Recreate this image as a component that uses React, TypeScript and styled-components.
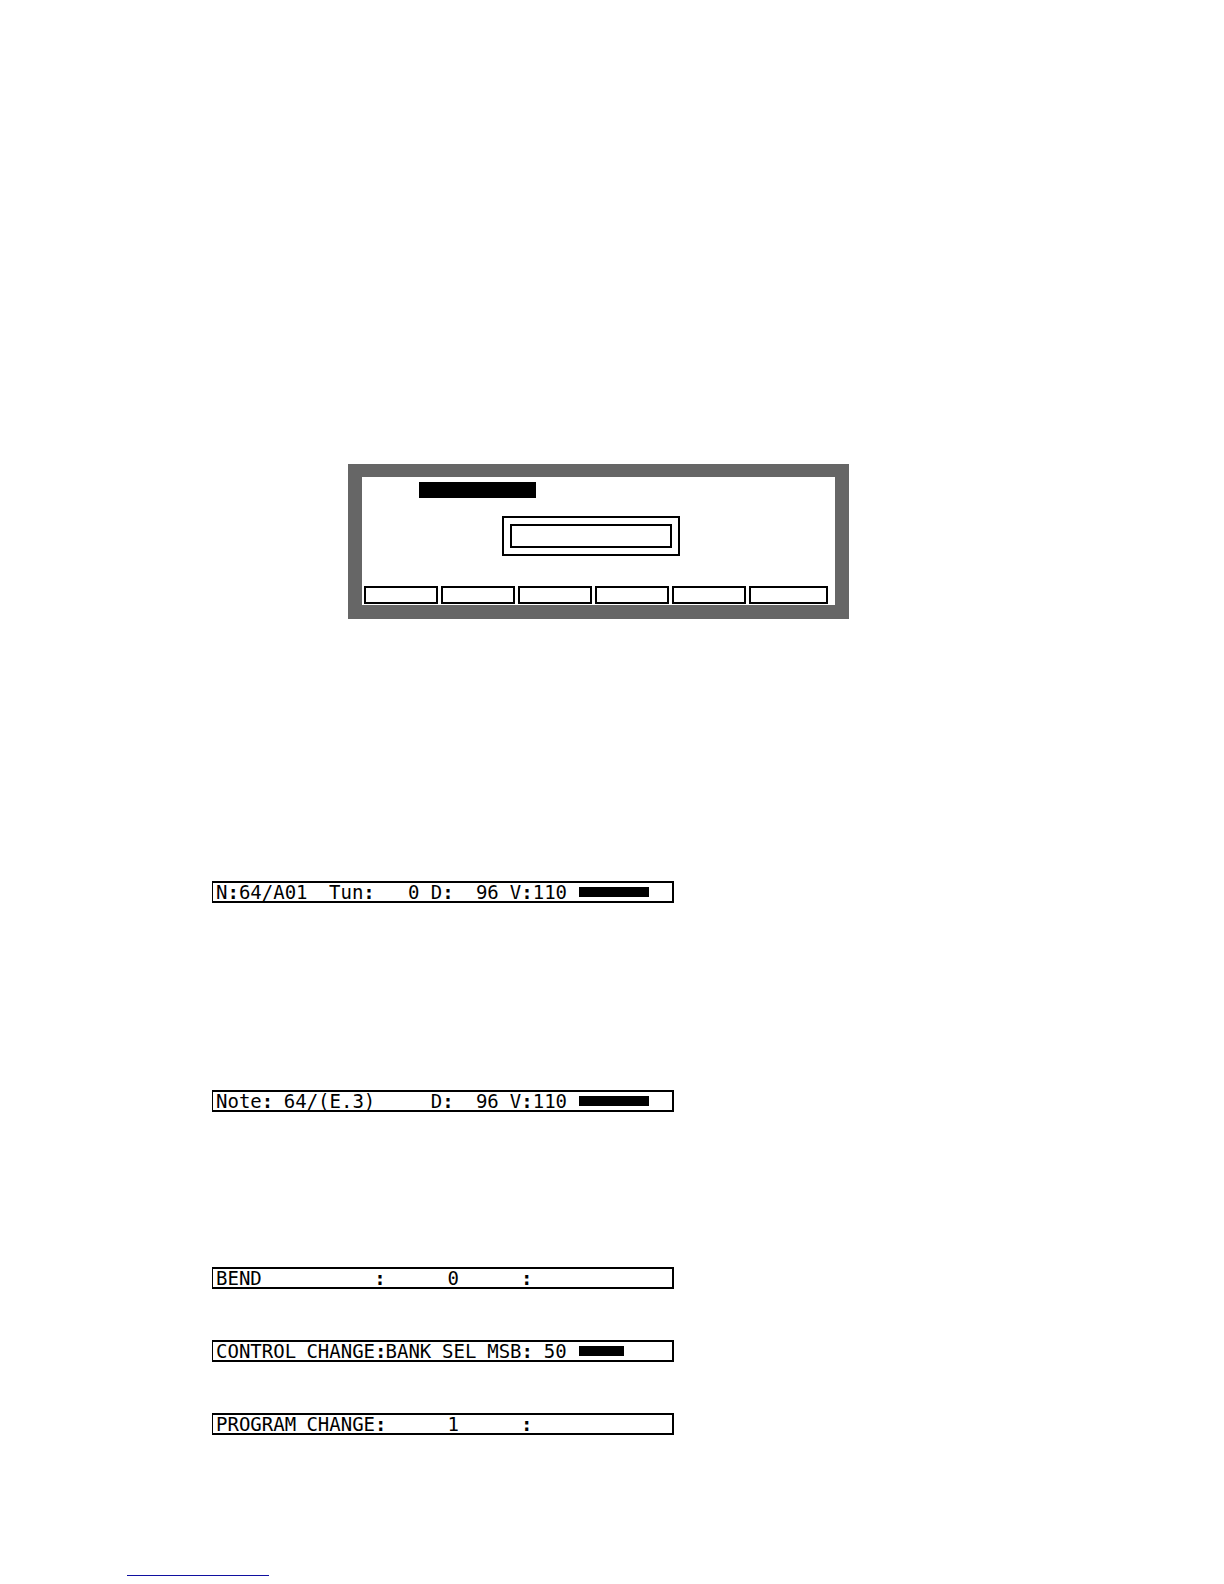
import React from "react";
import styled, { createGlobalStyle } from "styled-components";

const GlobalStyle = createGlobalStyle`
  *, *::before, *::after { box-sizing: border-box; }
  body { margin: 0; background: #ffffff; color: #000000; }
`;

const Page = styled.main`
  display: flex;
  flex-direction: column;
  padding: 464px 127px 8px;
  font-family: "DejaVu Sans Mono", "Liberation Mono", monospace;
`;

const Screen = styled.section`
  display: flex;
  flex-direction: column;
  width: 100%;
  max-width: 501px;
  margin-left: 221px;
  border: 14px solid #666666;
  border-top-width: 13px;
  padding: 5px 7px 1px 2px;
`;

const Highlight = styled.div`
  width: 117px;
  height: 16px;
  margin-left: 55px;
  background: #000000;
`;

const Popup = styled.div`
  width: 178px;
  margin: 18px 0 30px 138px;
  padding: 6px;
  border: 2px solid #000000;
`;

const PopupInner = styled.div`
  height: 24px;
  border: 2px solid #000000;
`;

const SoftKeys = styled.div`
  display: grid;
  grid-template-columns: repeat(5, minmax(0, 74fr)) minmax(0, 79fr);
  gap: 3px;
`;

const SoftKey = styled.button`
  height: 18px;
  padding: 0;
  border: 2px solid #000000;
  border-radius: 0;
  background: #ffffff;
`;

const EventList = styled.section`
  display: flex;
  flex-direction: column;
  width: 100%;
  max-width: 462px;
  margin: 262px 0 0 85px;
`;

/* One event line: forty character cells across. */
const EventRow = styled.div<{ $space: number }>`
  display: grid;
  grid-template-columns: repeat(40, minmax(0, 1fr));
  align-items: center;
  height: 22px;
  margin-top: ${(p) => p.$space}px;
  padding: 0 4px 0 3px;
  border: 2px solid #000000;
  border-left-width: 1px;
  font-size: 19px;
  line-height: 18px;
  white-space: pre;
`;

const Field = styled.span<{ $at: number; $span: number; $center?: boolean }>`
  grid-row: 1;
  grid-column: ${(p) => p.$at + 1} / span ${(p) => p.$span};
  text-align: ${(p) => (p.$center ? "center" : "left")};
`;

const Colon = styled.b`
  font-weight: 700;
`;

const Meter = styled.div`
  grid-row: 1;
  grid-column: 33 / span 8;
  height: 10px;
  padding-left: 1px;
`;

const MeterFill = styled.div`
  height: 100%;
  background: #000000;
`;

const FootRule = styled.hr`
  width: 142px;
  height: 1px;
  margin: 140px 0 0;
  border: 0;
  background: #1010a0;
`;

type Cell = { at: number; text: string; span?: number; center?: boolean };
type EventLine = { id: string; space: number; cells: Cell[]; level?: number };

const events: EventLine[] = [
  {
    id: "pad-note",
    space: 0,
    level: 79,
    cells: [
      { at: 0, text: "N:64/A01" },
      { at: 10, text: "Tun:" },
      { at: 17, text: "0" },
      { at: 19, text: "D:" },
      { at: 23, text: "96" },
      { at: 26, text: "V:110" },
    ],
  },
  {
    id: "midi-note",
    space: 187,
    level: 79,
    cells: [
      { at: 0, text: "Note:" },
      { at: 6, text: "64/(E.3)" },
      { at: 19, text: "D:" },
      { at: 23, text: "96" },
      { at: 26, text: "V:110" },
    ],
  },
  {
    id: "bend",
    space: 155,
    cells: [
      { at: 0, text: "BEND" },
      { at: 14, text: ":" },
      { at: 15, text: "0", span: 12, center: true },
      { at: 27, text: ":" },
    ],
  },
  {
    id: "control-change",
    space: 51,
    level: 51,
    cells: [
      { at: 0, text: "CONTROL" },
      { at: 8, text: "CHANGE:" },
      { at: 15, text: "BANK" },
      { at: 20, text: "SEL" },
      { at: 24, text: "MSB:" },
      { at: 29, text: "50" },
    ],
  },
  {
    id: "program-change",
    space: 51,
    cells: [
      { at: 0, text: "PROGRAM" },
      { at: 8, text: "CHANGE:" },
      { at: 15, text: "1", span: 12, center: true },
      { at: 27, text: ":" },
    ],
  },
];

/* Colons are drawn heavier than the characters around them. */
function CellText({ text }: { text: string }) {
  const [before, after] = text.split(":");
  if (after === undefined) return <>{text}</>;
  return (
    <>
      {before}
      <Colon>:</Colon>
      {after}
    </>
  );
}

export default function App() {
  return (
    <>
      <GlobalStyle />
      <Page>
        <Screen>
          <Highlight />
          <Popup>
            <PopupInner />
          </Popup>
          <SoftKeys>
            {[1, 2, 3, 4, 5, 6].map((n) => (
              <SoftKey key={n} type="button" aria-label={`Soft key ${n}`} />
            ))}
          </SoftKeys>
        </Screen>
        <EventList>
          {events.map((event) => (
            <EventRow key={event.id} $space={event.space}>
              {event.cells.map((cell) => (
                <Field
                  key={cell.at}
                  $at={cell.at}
                  $span={cell.span ?? cell.text.length}
                  $center={cell.center}
                >
                  <CellText text={cell.text} />
                </Field>
              ))}
              {event.level !== undefined && (
                <Meter>
                  <MeterFill style={{ width: `${event.level}%` }} />
                </Meter>
              )}
            </EventRow>
          ))}
        </EventList>
        <FootRule />
      </Page>
    </>
  );
}
